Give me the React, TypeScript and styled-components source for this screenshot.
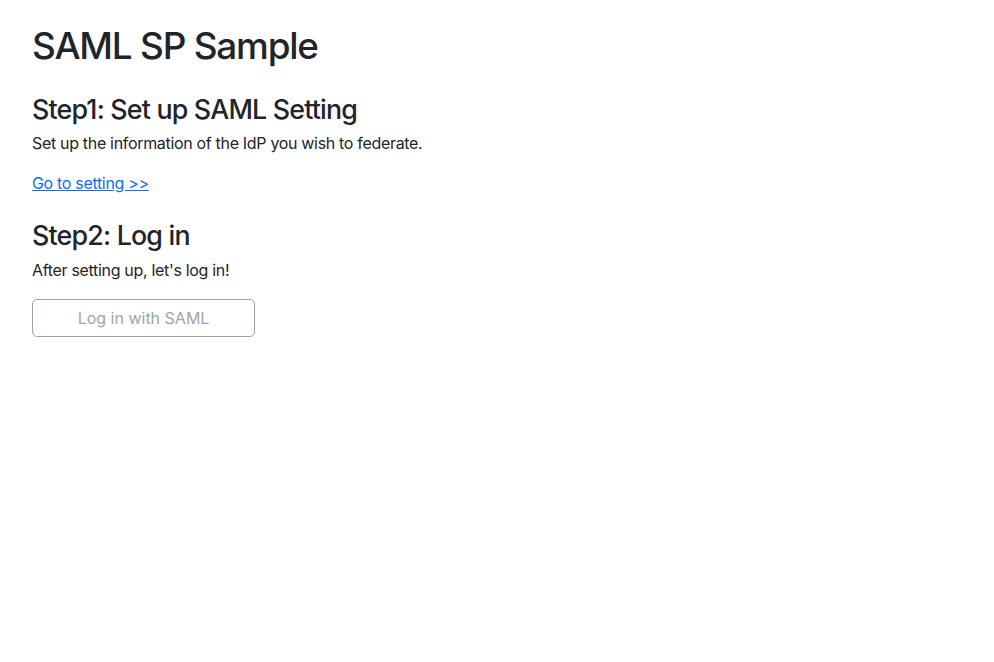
import React from "react";
import styled, { createGlobalStyle } from "styled-components";

const Global = createGlobalStyle`
  html, body { margin: 0; padding: 0; background: #fff; }
  body {
    font-family: Inter, "Noto Sans", sans-serif;
    font-size: 16px;
    line-height: 1.5;
    letter-spacing: -0.02em;
    color: #212529;
  }
`;

const Page = styled.main`
  padding: 24px 32px 0;
`;

const Title = styled.h1`
  margin: 0 0 25px;
  font-size: 36.9px;
  font-weight: 500;
  line-height: 1.2;
  letter-spacing: -0.033em;
`;

const Section = styled.section`
  & + & {
    margin-top: 24px;
  }
`;

const StepTitle = styled.h3`
  margin: 0 0 6px;
  font-size: 26.8px;
  font-weight: 500;
  line-height: 1.2;
  letter-spacing: -0.03em;
`;

const Text = styled.p`
  margin: 0 0 16px;
`;

const Link = styled.a`
  color: #0d6efd;
  text-decoration: underline;
`;

const Button = styled.button`
  display: block;
  width: 223px;
  height: 38px;
  margin-top: 17px;
  padding: 6px 12px;
  font: inherit;
  color: #6c757d;
  background: transparent;
  border: 1px solid #6c757d;
  border-radius: 5px;
  opacity: 0.65;
  cursor: default;
`;

const ButtonText = styled(Text)`
  margin: 2px 0 0;
`;

export default function App() {
  return (
    <>
      <Global />
      <Page>
        <Title>SAML SP Sample</Title>
        <Section>
          <StepTitle>Step1: Set up SAML Setting</StepTitle>
          <Text>Set up the information of the IdP you wish to federate.</Text>
          <Text>
            <Link href="#">Go to setting &gt;&gt;</Link>
          </Text>
        </Section>
        <Section>
          <StepTitle>Step2: Log in</StepTitle>
          <ButtonText>After setting up, let's log in!</ButtonText>
          <Button disabled>Log in with SAML</Button>
        </Section>
      </Page>
    </>
  );
}
